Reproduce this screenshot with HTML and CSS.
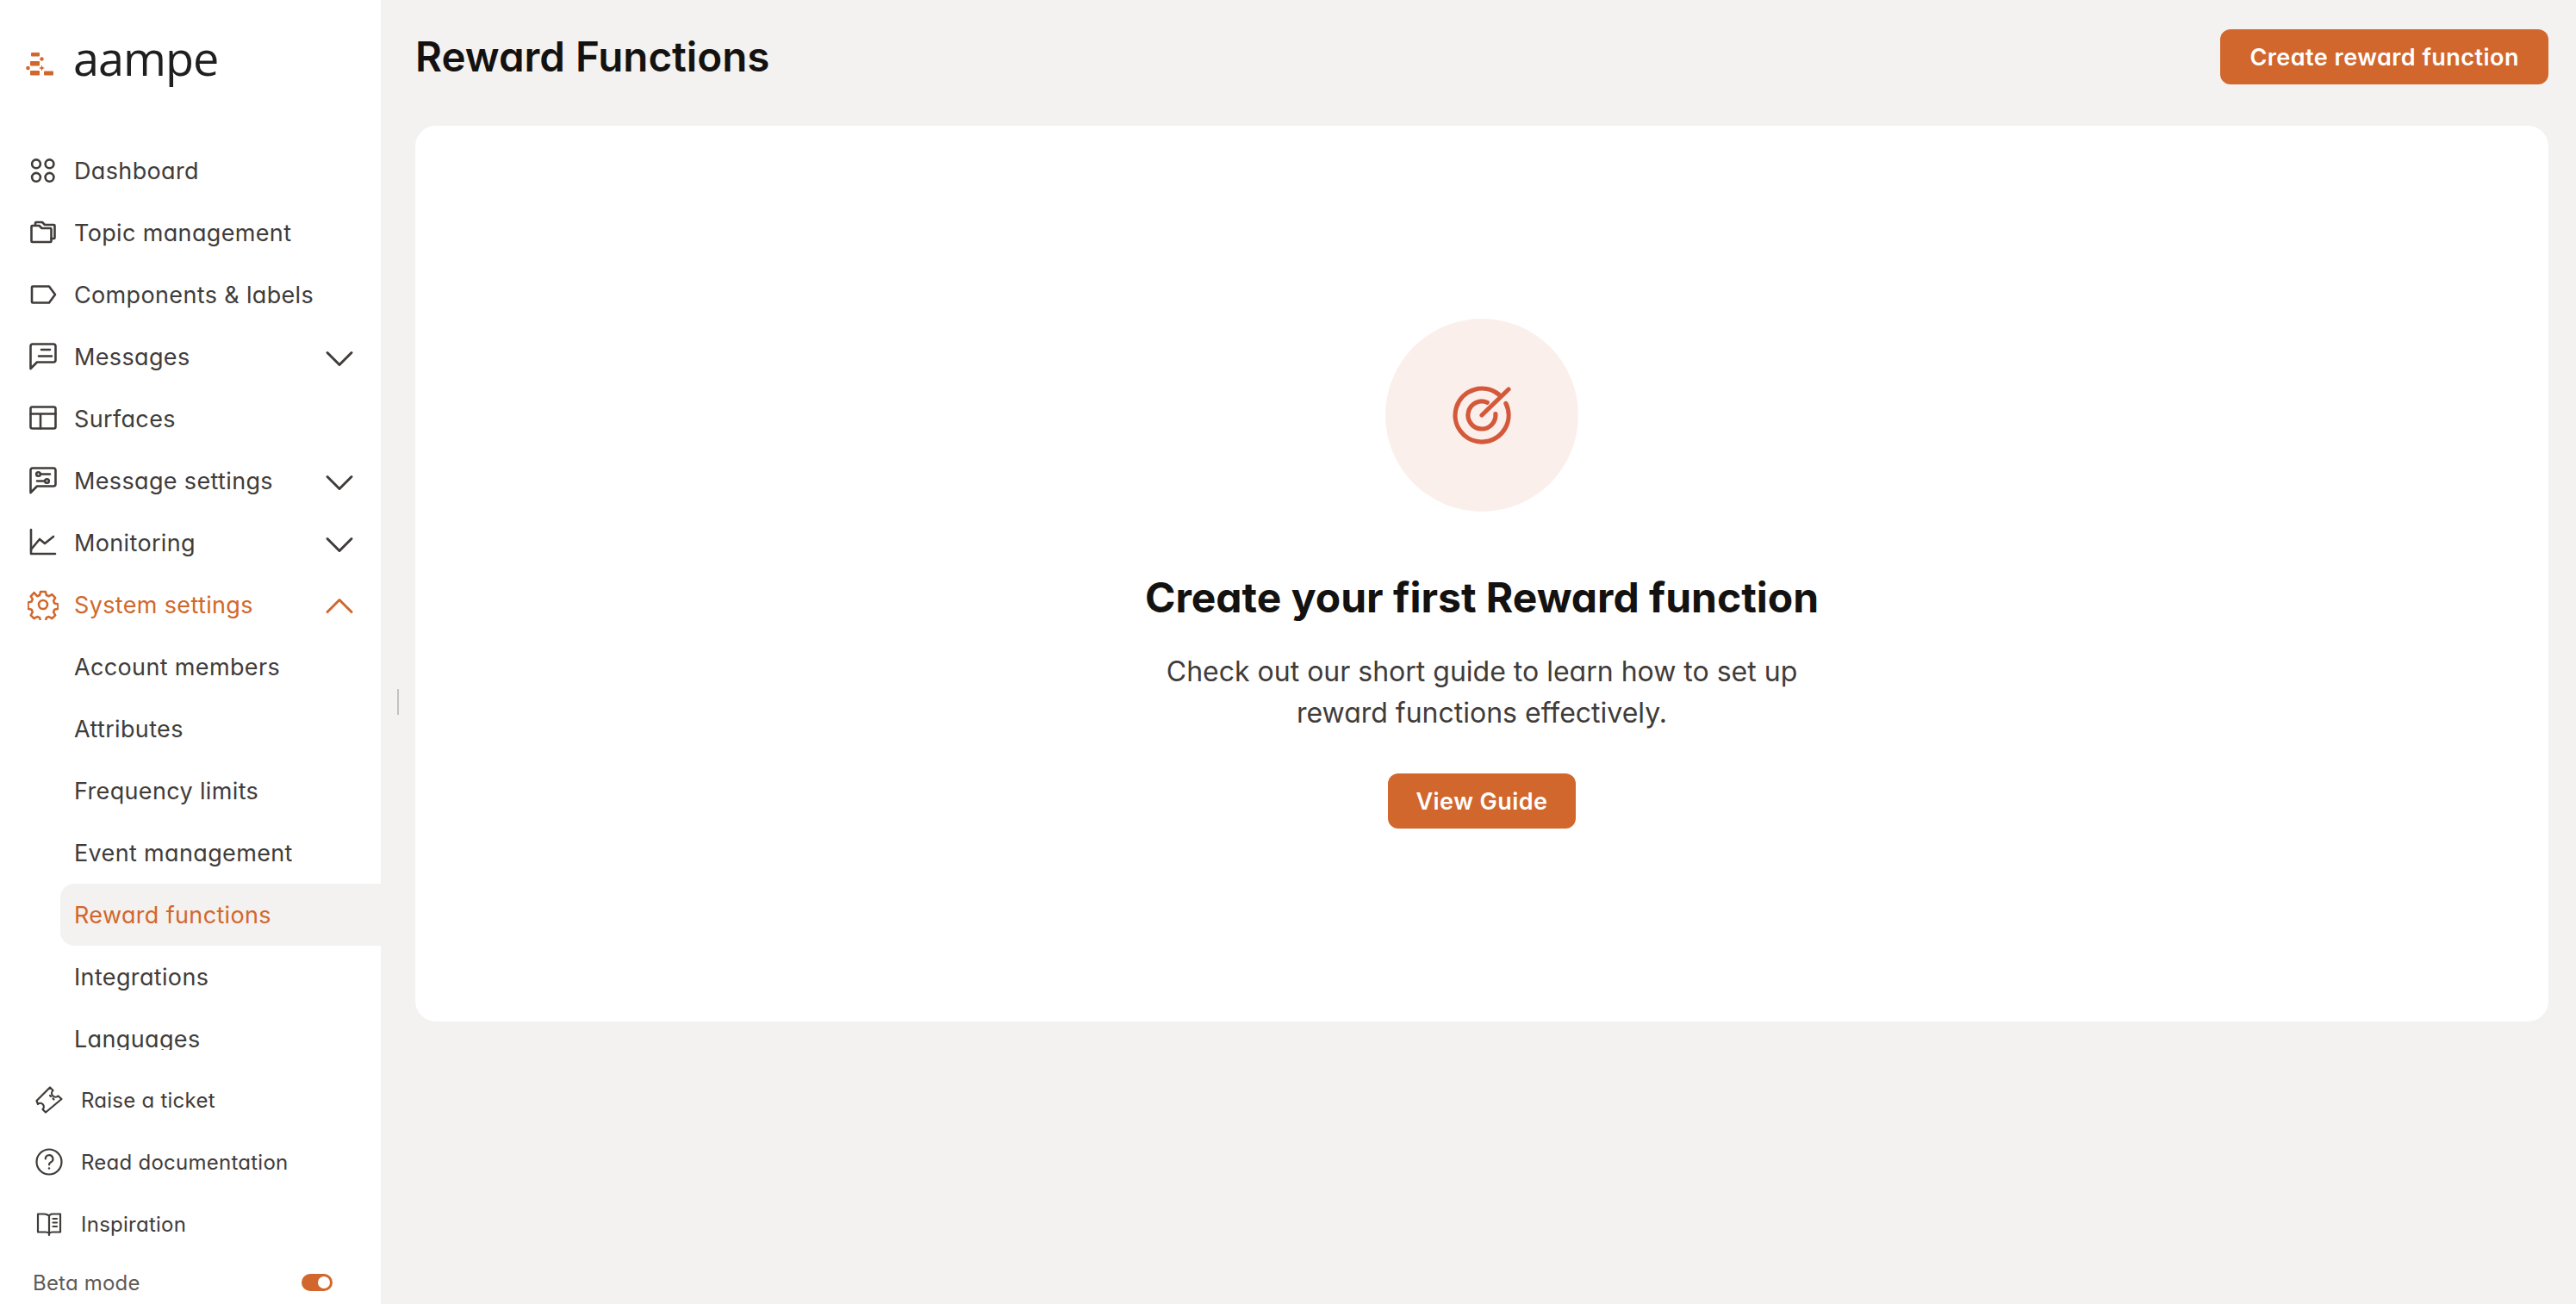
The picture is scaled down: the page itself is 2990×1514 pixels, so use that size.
FILE: index.html
```html
<!DOCTYPE html>
<html lang="en">
<head>
<meta charset="utf-8">
<title>Reward Functions</title>
<link rel="stylesheet" href="styles.css">
</head>
<body>
<div class="app">
  <aside class="sidebar">
    <div class="brand">
      <svg class="logo" viewBox="0 0 34 30" width="34" height="30" fill="#d2672d">
        <rect x="6" y="1" width="10" height="4.5" rx="1"/><circle cx="18.5" cy="8.5" r="2.2"/>
        <rect x="5" y="11" width="11" height="5.5" rx="1"/><circle cx="2.5" cy="19" r="2.3"/>
        <path d="M18.5 15.5l1 2.5 2.5 1-2.5 1-1 2.5-1-2.5-2.5-1 2.5-1z"/>
        <rect x="5" y="22" width="11" height="5.5" rx="1"/><rect x="21" y="22.5" width="11" height="5" rx="1"/>
      </svg>
      <span class="wordmark">aampe</span>
    </div>
    <nav class="nav">
      <a class="item"><svg class="ic" viewBox="0 0 36 36"><circle cx="10" cy="10.300" r="4.900"/><circle cx="25.500" cy="10.300" r="4.900"/><circle cx="10" cy="25.800" r="4.900"/><circle cx="25.500" cy="25.800" r="4.900"/></svg><span>Dashboard</span></a>
      <a class="item"><svg class="ic" viewBox="0 0 36 36"><path d="M4.500 11a1 1 0 0 1 1-1h8l3 3H26.500a1 1 0 0 1 1 1V28a1 1 0 0 1-1 1H5.500a1 1 0 0 1-1-1z"/><path d="M9 9V7a1 1 0 0 1 1-1h7l3 3h10.500a1 1 0 0 1 1 1V24a1 1 0 0 1-1 1h-3"/></svg><span>Topic management</span></a>
      <a class="item"><svg class="ic" viewBox="0 0 36 36"><path d="M5 9.500a1 1 0 0 1 1-1H25l7 9.500-7 9.500H6a1 1 0 0 1-1-1z"/></svg><span>Components &amp; labels</span></a>
      <a class="item"><svg class="ic" viewBox="0 0 36 36"><path d="M3.500 6a2.500 2.500 0 0 1 2.500-2.500H30a2.500 2.500 0 0 1 2.500 2.500V22a2.500 2.500 0 0 1-2.500 2.500H11L3.500 32z"/><path d="M16 10H26M13 17.500H28"/></svg><span>Messages</span><svg class="chev" viewBox="0 0 36 36"><path d="M4 11.500l14 14 14-14"/></svg></a>
      <a class="item"><svg class="ic" viewBox="0 0 36 36"><rect x="3.500" y="4.500" width="29" height="25" rx="2"/><path d="M3.500 12.500H32.500M15 12.500V29.500"/></svg><span>Surfaces</span></a>
      <a class="item"><svg class="ic" viewBox="0 0 36 36"><path d="M3.500 6a2.500 2.500 0 0 1 2.500-2.500H30a2.500 2.500 0 0 1 2.500 2.500V22a2.500 2.500 0 0 1-2.500 2.500H11L3.500 32z"/><circle cx="12.500" cy="10.500" r="2.300"/><circle cx="22.500" cy="18.500" r="2.300"/><path d="M15.500 10.500H26M11 18.500H19.500"/></svg><span>Message settings</span><svg class="chev" viewBox="0 0 36 36"><path d="M4 11.500l14 14 14-14"/></svg></a>
      <a class="item"><svg class="ic" viewBox="0 0 36 36"><path d="M4 3V31H32"/><path d="M4 26L14 14l6 5 10-8"/></svg><span>Monitoring</span><svg class="chev" viewBox="0 0 36 36"><path d="M4 11.500l14 14 14-14"/></svg></a>
      <a class="item active"><svg class="ic gear" viewBox="0 0 36 36"><path d="M15 2.500h6l1 4.200 3 1.300 3.700-2.200 4 4.200-2.200 3.500 1.200 3 4.300 1v5.500l-4.300 1-1.200 3 2.200 3.700-4 4-3.700-2.200-3 1.200-1 4.300h-6l-1-4.300-3-1.200-3.700 2.200-4-4 2.200-3.700-1.200-3-4.300-1V15.500l4.300-1 1.200-3-2.200-3.500 4-4.200L11 8l3-1.300z" transform="translate(.5 .5) scale(.97)"/><circle cx="18" cy="18" r="5"/></svg><span>System settings</span><svg class="chev" viewBox="0 0 36 36"><path d="M4 24.500l14-14 14 14"/></svg></a>
      <a class="sub">Account members</a>
      <a class="sub">Attributes</a>
      <a class="sub">Frequency limits</a>
      <a class="sub">Event management</a>
      <a class="sub current">Reward functions</a>
      <a class="sub">Integrations</a>
      <a class="sub">Languages</a>
    </nav>
    <div class="foot">
      <a class="fitem"><svg class="fic" viewBox="0 0 32 32"><path d="M1.500 17L17 1.500l3.500 3.500a4 4 0 0 0 6 6.500l4 3.500L12 30.500l-3.500-3.500a4 4 0 0 0-5.500-6z"/><path d="M17 11l1 1M20.500 14.500l1 1"/></svg><span>Raise a ticket</span></a>
      <a class="fitem"><svg class="fic" viewBox="0 0 32 32"><circle cx="16" cy="16" r="14.500"/><path d="M11.800 12.500a4.300 4.300 0 1 1 6.300 3.800c-1.300.7-2.100 1.500-2.100 3"/><circle class="dot" cx="16" cy="23.500" r="1.200"/></svg><span>Read documentation</span></a>
      <a class="fitem"><svg class="fic" viewBox="0 0 32 32"><path d="M16 6.500c-2-1.500-3.500-2-6-2H3v21h9c2 0 3 .5 4 1.500 1-1 2-1.500 4-1.500h9v-21h-9c-2 0-3 .5-4 2zM16 6.500V29"/><path d="M20.500 10H25M20.500 14.500H25M20.500 19H25"/></svg><span>Inspiration</span></a>
      <div class="beta"><span>Beta mode</span><span class="toggle"><span class="knob"></span></span></div>
    </div>
  </aside>
  <main class="main">
    <div class="handle"></div>
    <header class="top">
      <h1>Reward Functions</h1>
      <button class="btn">Create reward function</button>
    </header>
    <section class="card">
      <div class="circle">
        <svg class="target" viewBox="0 0 68 68"><path d="M61.900 20.400A31 31 0 1 1 53.500 9.900"/><path d="M49.900 32.600A16 16 0 1 1 40.300 19.300"/><path d="M34 34L65 4"/></svg>
      </div>
      <h2>Create your first Reward function</h2>
      <p>Check out our short guide to learn how to set up<br>reward functions effectively.</p>
      <button class="btn guide">View Guide</button>
    </section>
  </main>
</div>
</body>
</html>
```
FILE: styles.css
```css
* { box-sizing: border-box; }
html, body { margin: 0; height: 100%; }
body {
  font-family: "Inter", "Liberation Sans", sans-serif;
  font-feature-settings: "cv11" 1;
  background: #f3f2f0;
  color: #403c3a;
  overflow: hidden;
}
.app { display: flex; height: 1514px; }
.sidebar {
  width: 442px;
  flex: none;
  background: #fff;
  display: flex;
  flex-direction: column;
  height: 100%;
}
.brand { height: 162px; flex: none; display: flex; align-items: flex-start; padding: 36px 0 0 30px; gap: 21px; }
.logo { margin-top: 24px; flex: none; }
.wordmark { font-family: "Open Sans", sans-serif; font-feature-settings: normal; font-weight: 500; font-size: 54px; line-height: 62px; color: #1f1f1f; letter-spacing: -1px; }
.nav { height: 1057px; overflow: hidden; flex: none; font-size: 27px; }
.item, .sub { display: flex; align-items: center; height: 72px; letter-spacing: .35px; }
.item { padding-left: 32px; gap: 18px; }
.item span { flex: none; }
.ic { width: 36px; height: 36px; flex: none; fill: none; stroke: currentColor; stroke-width: 2.600; stroke-linejoin: round; stroke-linecap: round; }
.chev { width: 36px; height: 36px; margin: 4px 30px 0 auto; flex: none; fill: none; stroke: currentColor; stroke-width: 3; stroke-linecap: round; stroke-linejoin: round; }
.active { color: #d2672d; }
.sub { margin-left: 70px; padding-left: 16px; }
.current { color: #d2672d; background: #f3f2f0; border-radius: 16px 0 0 16px; }
.foot { flex: 1; padding-top: 22px; font-size: 24px; }
.fitem { display: flex; align-items: center; height: 72px; padding-left: 41px; gap: 21px; letter-spacing: .25px; }
.fic { width: 32px; height: 32px; flex: none; fill: none; stroke: currentColor; stroke-width: 2.200; stroke-linejoin: round; stroke-linecap: round; }
.dot { fill: currentColor; stroke: none; }
.beta { display: flex; align-items: center; justify-content: space-between; height: 50px; margin-top: 7px; padding: 0 56px 0 38px; color: #5f5a57; letter-spacing: .2px; }
.toggle { width: 36px; height: 20px; border-radius: 10px; background: #d2672d; display: flex; align-items: center; justify-content: flex-end; padding-right: 3px; }
.knob { width: 14px; height: 14px; border-radius: 50%; background: #fff; }
.main { flex: 1; position: relative; padding: 0 32px 0 40px; min-width: 0; }
.handle { position: absolute; left: 19px; top: 800px; width: 2px; height: 30px; background: #c4c2c0; }
.top { height: 146px; display: flex; align-items: flex-start; justify-content: space-between; padding-top: 34px; }
h1 { margin: 0; font-size: 47.500px; line-height: 64px; font-weight: 600; color: #141210; }
.btn { border: 0; background: #d2672d; color: #fff; font: inherit; font-weight: 600; font-size: 27px; height: 64px; padding: 0 34px; border-radius: 12px; letter-spacing: .47px; }
.card { height: 1040px; background: #fff; border-radius: 24px; display: flex; flex-direction: column; align-items: center; padding-top: 224px; }
.circle { width: 224px; height: 224px; border-radius: 50%; background: #faefeb; display: flex; align-items: center; justify-content: center; }
.target { width: 68px; height: 68px; fill: none; stroke: #d4593a; stroke-width: 5.200; stroke-linecap: round; }
h2 { margin: 70px 0 0; font-size: 48px; line-height: 60px; font-weight: 700; color: #141210; }
.card p { margin: 32px 0 0; font-size: 32px; line-height: 48px; text-align: center; }
.guide { margin-top: 46px; padding: 0 32px; }
```
